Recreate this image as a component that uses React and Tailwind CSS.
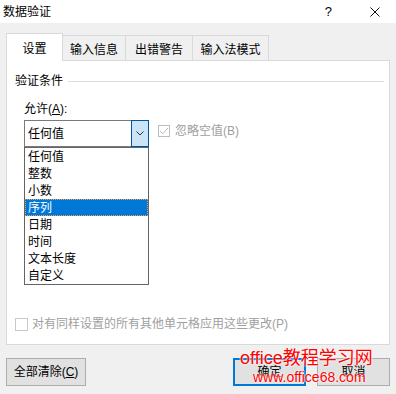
import React from 'react';

const FONT = "font-['Liberation_Sans','Noto_Sans_CJK_SC',sans-serif]";

const options = ['任何值', '整数', '小数', '序列', '日期', '时间', '文本长度', '自定义'];

const Tab = ({ label, active, width }) => (
  <div
    className={
      active
        ? `${width} h-[28px] -mb-px relative z-10 bg-white border border-b-0 border-[#d9d9d9] flex items-center justify-center pt-[3px]`
        : `${width} h-[25px] -ml-px bg-[#f0f0f0] border border-b-0 border-[#d9d9d9] flex items-center justify-center pt-[3px]`
    }
  >
    {label}
  </div>
);

export default function App() {
  return (
    <div className={`w-[396px] h-[394px] bg-[#f0f0f0] relative overflow-hidden text-[12px] leading-[16px] text-black ${FONT}`}>
      {/* Title bar */}
      <div className="h-[23px] bg-white flex items-center pl-[3px]">
        <span className="pt-[1px]">数据验证</span>
        <span className="ml-auto mr-[38px] text-[13px]">?</span>
        <svg width="10" height="10" viewBox="0 0 10 10" className="mr-[16px]">
          <path d="M0.5 0.5 L9.5 9.5 M9.5 0.5 L0.5 9.5" stroke="#111" strokeWidth="1" fill="none" />
        </svg>
      </div>

      <div className="pt-[9px] px-[6px]">
        {/* Tabs */}
        <div className="flex items-end h-[28px]">
          <Tab label="设置" active width="w-[57px]" />
          <Tab label="输入信息" width="w-[64px]" />
          <Tab label="出错警告" width="w-[68px]" />
          <Tab label="输入法模式" width="w-[77px]" />
        </div>

        {/* Panel */}
        <div className="h-[285px] bg-white border border-[#d9d9d9] flex flex-col pl-[8px] pr-[5px] pt-[12px] pb-[12px]">
          <div className="flex items-center h-[16px]">
            <span>验证条件</span>
            <div className="flex-1 ml-[5px] h-px bg-[#dcdcdc]" />
          </div>

          <div className="mt-[12px] pl-[9px] h-[16px]">
            允许(<span className="underline">A</span>):
          </div>

          <div className="mt-[3px] pl-[9px] flex items-start">
            <div className="relative w-[125px] h-[27px] bg-white border border-[#7a7a7a] flex items-center">
              <span className="flex-1 pl-[3px]">任何值</span>
              <div className="w-[18px] h-[27px] -mr-px -my-px bg-[#cce4f7] border border-[#005499] flex items-center justify-center">
                <svg width="8" height="5" viewBox="0 0 8 5">
                  <polyline points="0.5,0.5 4,4 7.5,0.5" stroke="#333" strokeWidth="1" fill="none" />
                </svg>
              </div>

              {/* Open dropdown list */}
              <div className="absolute top-[26px] -left-px w-[125px] h-[138px] bg-white border border-[#646464] z-20">
                {options.map((o) =>
                  o === '序列' ? (
                    <div key={o} className="h-[17px] bg-[#0078d7] text-white border border-dotted border-[#f5a040] pl-[2px] flex items-center">
                      {o}
                    </div>
                  ) : (
                    <div key={o} className="h-[17px] pl-[3px] flex items-center">
                      {o}
                    </div>
                  )
                )}
              </div>
            </div>

            <div className="ml-[9px] mt-[3px] flex items-center text-[#a0a0a0]">
              <div className="w-[12px] h-[12px] border border-[#bcbcbc] flex items-center justify-center">
                <svg width="10" height="8" viewBox="0 0 10 8">
                  <polyline points="1,4 3.8,6.8 9,1" stroke="#bcbcbc" strokeWidth="1" fill="none" />
                </svg>
              </div>
              <span className="ml-[5px]">忽略空值(B)</span>
            </div>
          </div>

          <div className="mt-auto flex items-center h-[16px]">
            <div className="w-[13px] h-[13px] border border-[#c8c8c8] bg-white" />
            <span className="ml-[4px] text-[#a0a0a0]">对有同样设置的所有其他单元格应用这些更改(P)</span>
          </div>
        </div>
      </div>

      {/* Buttons */}
      <div className="mt-[13px] px-[6px] flex">
        <div className="w-[80px] h-[28px] bg-[#e1e1e1] border border-[#adadad] flex items-center justify-center">
          全部清除(<span className="underline">C</span>)
        </div>
        <div className="ml-auto w-[73px] h-[28px] bg-[#e1e1e1] border-2 border-[#0078d7] flex items-center justify-center">
          确定
        </div>
        <div className="ml-[11px] w-[73px] h-[28px] bg-[#e1e1e1] border border-[#adadad] flex items-center justify-center">
          取消
        </div>
      </div>

      {/* Watermark */}
      <div className="absolute left-[240px] top-[347px] text-[#ff0000] text-[18px] leading-[22px] [text-shadow:0_0_2px_#fff,0_0_2px_#fff]">
        office教程学习网
      </div>
      <div className="absolute left-[253px] top-[369px] text-[#ff0000] text-[14px] leading-[16px] [text-shadow:0_0_2px_#fff,0_0_2px_#fff]">
        www.office68.com
      </div>
    </div>
  );
}
